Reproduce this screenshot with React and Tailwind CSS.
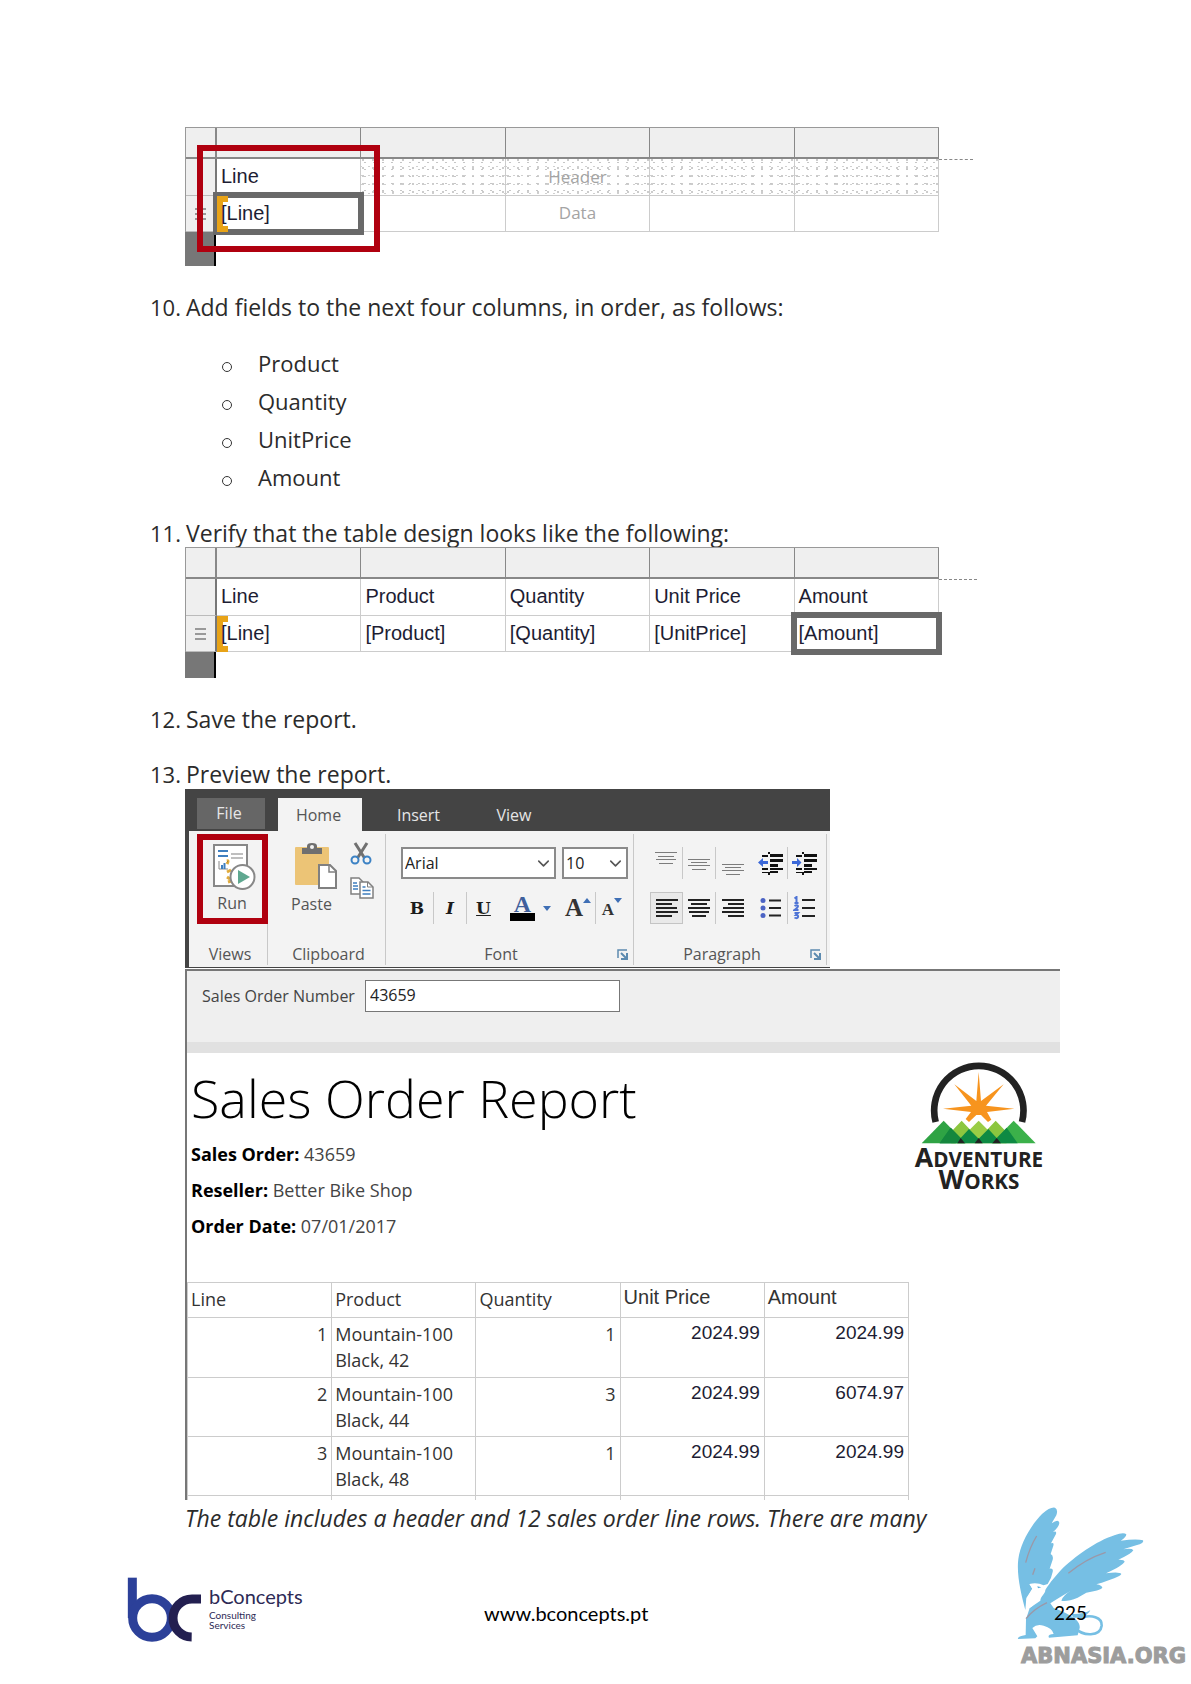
import React from "react";
import { ChevronDown } from "lucide-react";

const ARIAL = "font-['Liberation_Sans',Arial,sans-serif]";

function Bracket() {
  return (
    <span className="absolute left-0 top-0 h-9 w-[11px] bg-[#e8a317]">
      <span className="absolute left-[6px] top-[6px] bottom-[6px] right-0 bg-white" />
    </span>
  );
}

function DesignTable({ header, data, selected, placeholder, tail }) {
  return (
    <div className="relative w-full max-w-[754px]">
      <table className={"w-full table-fixed border-separate border-spacing-0 border-l border-t border-[#999] text-[20px] leading-6 text-[#1d1d33] " + ARIAL}>
        <colgroup>
          <col className="w-[31px]" />
          <col /><col /><col /><col /><col />
        </colgroup>
        <thead>
          <tr className="h-[31px] bg-[#efefef]">
            <td className="border-b-2 border-r-2 border-[#888]" />
            {header.map((_, i) => (
              <td key={i} className="border-b-2 border-r border-[#888]" />
            ))}
          </tr>
        </thead>
        <tbody>
          <tr className="h-[37px]">
            <td className="border-b border-r-2 border-b-[#bbb] border-r-[#777] bg-[#efefef]" />
            {header.map((h, i) => (
              <th
                key={i}
                scope="col"
                className={
                  placeholder && i > 0
                    ? "border-b border-r border-[#ccc] bg-[radial-gradient(#c6c6c6_1px,transparent_1px),radial-gradient(#d0d0d0_1px,transparent_1px),radial-gradient(#cccccc_1px,transparent_1px)] bg-[size:9px_7px,8px_9px,10px_8px] bg-[position:0_0,4px_3px,7px_5px] p-0 pb-px text-center font-['Open_Sans',sans-serif] text-[17px] font-normal text-[#a4a4a4]"
                    : "border-b border-r border-[#ccc] p-0 pb-[2px] pl-1 text-left font-normal"
                }
              >
                {h}
              </th>
            ))}
          </tr>
          <tr className="h-[36px]">
            <td className="border-b border-r-2 border-b-[#bbb] border-r-[#777] bg-[#efefef] p-0">
              <span className="mx-auto flex w-[11px] flex-col gap-[3px]">
                <i className="h-[2px] bg-[#999]" />
                <i className="h-[2px] bg-[#999]" />
                <i className="h-[2px] bg-[#999]" />
              </span>
            </td>
            {data.map((d, i) => (
              <td
                key={i}
                className={
                  placeholder && i > 0
                    ? "border-b border-r border-[#ccc] p-0 pb-px text-center font-['Open_Sans',sans-serif] text-[17px] text-[#a4a4a4]"
                    : "relative border-b border-r border-[#ccc] p-0 pb-[2px] pl-1"
                }
              >
                {selected === i && <span className="absolute -inset-x-1 -inset-y-1 border-[6px] border-[#696969]" />}
                {i === 0 && <Bracket />}
                <span className="relative">{d}</span>
              </td>
            ))}
          </tr>
        </tbody>
      </table>
      <span className={"absolute left-full top-8 border-t border-dashed border-[#888] " + tail} />
    </div>
  );
}

function Bars({ rows, color, h = 2, height = 20 }) {
  return (
    <svg width="22" height={height} viewBox={`0 0 22 ${height}`} aria-hidden="true">
      {rows.map(([x, y, w], i) => (
        <rect key={i} x={x} y={y} width={w} height={h} fill={color} />
      ))}
    </svg>
  );
}

function Indent({ right }) {
  return (
    <svg width="26" height="24" viewBox="0 0 26 24" aria-hidden="true">
      <g fill="#111">
        <rect x="4" y="4" width="6" height="2" /><rect x="12" y="3" width="13" height="3" />
        <rect x="12" y="8" width="13" height="3" /><rect x="12" y="13" width="8" height="3" />
        <rect x="4" y="17" width="6" height="2" /><rect x="12" y="17" width="13" height="2" />
        <rect x="4" y="21" width="8" height="1" /><rect x="12" y="20" width="8" height="2" />
        <rect x="10" y="1" width="2" height="2" /><rect x="10" y="22" width="2" height="2" />
      </g>
      <path d={right ? "M9.500 11.500L5 7v3H0v3h5v3z" : "M0 11.500L5 7v3h5v3H5v3z"} fill="#3b68d8" />
    </svg>
  );
}

function BulletsIcon() {
  return (
    <svg width="22" height="22" viewBox="0 0 22 22" aria-hidden="true">
      {[3.5, 11, 18.5].map((y) => (
        <g key={y}>
          <circle cx="3" cy={y} r="2.500" fill="#4b63c4" />
          <rect x="9" y={y - 1} width="12" height="2" fill="#222" />
        </g>
      ))}
    </svg>
  );
}

function NumbersIcon() {
  return (
    <svg width="24" height="24" viewBox="0 0 24 24" aria-hidden="true">
      <path d="M1.500 2.500L3.500 1v6M1.500 7h4M1.500 10q2.500-1.500 3.500 0q0 1.500-3.500 4h4M1.500 17h3.500l-2 2q2.500 0 2 2q-1 2-3.500.500" fill="none" stroke="#4f74d6" strokeWidth="2" />
      <rect x="9" y="3" width="13" height="2" fill="#222" />
      <rect x="9" y="11" width="13" height="2" fill="#222" />
      <rect x="9" y="19" width="13" height="2" fill="#222" />
    </svg>
  );
}

function RunIcon() {
  return (
    <svg className="ml-1" width="43" height="47" viewBox="0 0 43 47" aria-hidden="true">
      <rect x="1" y="1" width="33" height="41" fill="#fff" stroke="#888" strokeWidth="2" />
      <path d="M5 7h10M5 12h10" stroke="#3f7fbf" strokeWidth="2" />
      <path d="M18 10h12M18 14h12" stroke="#aaa" strokeWidth="1.500" />
      <path d="M6 17v8h9" stroke="#888" fill="none" />
      <path d="M9 25v-4M11.500 25v-6" stroke="#3f7fbf" strokeWidth="2" />
      <path d="M14 20q2-4 0-3M14 28l4-2M14 33l3 2M15 38l3-1" stroke="#e0ab3c" strokeWidth="3" />
      <circle cx="29.500" cy="33" r="12" fill="#fff" stroke="#888" strokeWidth="2" />
      <path d="M25 26v14l12-7z" fill="#5fa890" />
    </svg>
  );
}

function PasteIcon() {
  return (
    <svg width="42" height="46" viewBox="0 0 42 46" aria-hidden="true">
      <rect x="0" y="4" width="34" height="38" rx="1" fill="#ecc476" />
      <path d="M7 11V5h5V3q0-3 5-3t5 3v2h5v6z" fill="#6f6f6f" />
      <circle cx="17" cy="4" r="2" fill="#f3f3f3" />
      <path d="M24 22h11l6 6v17H24z" fill="#fff" stroke="#808080" strokeWidth="2" />
      <path d="M34 22v7h7" fill="none" stroke="#808080" strokeWidth="1.500" />
    </svg>
  );
}

function CutIcon() {
  return (
    <svg width="22" height="23" viewBox="0 0 22 23" aria-hidden="true">
      <path d="M5 1l9.500 15M17 1L7.500 16" stroke="#707070" strokeWidth="3" />
      <circle cx="5" cy="18" r="3.500" fill="none" stroke="#3c82c4" strokeWidth="2" />
      <circle cx="17" cy="18" r="3.500" fill="none" stroke="#3c82c4" strokeWidth="2" />
    </svg>
  );
}

function CopyIcon() {
  return (
    <svg width="24" height="22" viewBox="0 0 24 22" aria-hidden="true">
      <path d="M1 1h8l4 4v12H1z" fill="#fff" stroke="#808080" strokeWidth="1.500" />
      <path d="M3 6h4M3 9h5M3 12h5" stroke="#3f7fbf" strokeWidth="1.500" />
      <path d="M10 5h8l5 5v11H10z" fill="#fff" stroke="#808080" strokeWidth="1.500" />
      <path d="M17.500 5v5H23" fill="none" stroke="#808080" />
      <path d="M12.500 10h3M12.500 13.500h8M12.500 17h8" stroke="#3f7fbf" strokeWidth="1.500" />
    </svg>
  );
}

function Launcher() {
  return (
    <button type="button" aria-label="More options" className="self-center">
      <svg width="11" height="11" viewBox="0 0 11 11" aria-hidden="true">
        <path d="M1 9V1h9" fill="none" stroke="#5d8bb0" strokeWidth="1.500" />
        <path d="M4 4l5 5M10 4v6H4" fill="none" stroke="#5d8bb0" strokeWidth="2" />
      </svg>
    </button>
  );
}

const tool = "flex h-8 w-[33px] items-center justify-center";
const sep = " border-r border-[#c8c8c8]";
const slab = " font-['DejaVu_Serif',serif] text-[17px]";
const gray = "#7c7c7c";

function Ribbon() {
  return (
    <div className="flex w-full max-w-[645px] flex-col border-b border-l-4 border-[#444] bg-[#f3f3f3] text-[16px] leading-5 text-[#555]">
      <div className="-ml-1 flex h-[42px] items-end bg-[#444] pl-3 text-[#e6e6e6]">
        <button type="button" className="mb-[2px] mr-[13px] h-[31px] w-[68px] bg-[#666] pb-[2px] pr-1">File</button>
        <button type="button" className="h-[33px] w-[84px] bg-[#f3f3f3] pr-[3px] text-[#555]">Home</button>
        <button type="button" className="h-[33px] w-[113px]">Insert</button>
        <button type="button" className="h-[33px] w-[78px]">View</button>
      </div>
      <div className="flex pb-[2px] pr-[3px] pt-[3px]">
        <div className={"flex h-[131px] w-[79px] flex-col items-center justify-between pb-px" + sep}>
          <button type="button" className="ml-2 flex h-[90px] w-[71px] flex-col items-center justify-between border-[6px] border-[#b0000f] pb-[5px] pt-1">
            <RunIcon />
            <span>Run</span>
          </button>
          <span className="pl-1">Views</span>
        </div>
        <div className={"flex w-[120px] flex-col items-center justify-between pb-px" + sep}>
          <div className="flex gap-[10px] pl-1">
            <button type="button" className="ml-2 flex h-20 w-[48px] flex-col items-center justify-between pt-[9px]">
              <PasteIcon />
              <span className="pr-2">Paste</span>
            </button>
            <div className="flex flex-col gap-3 pt-2">
              <button type="button" aria-label="Cut"><CutIcon /></button>
              <button type="button" aria-label="Copy"><CopyIcon /></button>
            </div>
          </div>
          <span className="pl-1">Clipboard</span>
        </div>
        <div className={"flex w-[248px] flex-col justify-between pb-px pl-[15px] pr-[5px]" + sep}>
          <div className="flex flex-col gap-[13px] pt-[13px]">
            <div className="flex gap-[6px] text-[#222]">
              <label className="relative h-8 w-[155px]">
                <select aria-label="Font family" className="size-full appearance-none border-2 border-[#8a8a8a] bg-white pl-[2px]">
                  <option>Arial</option>
                </select>
                <ChevronDown className="pointer-events-none absolute right-[3px] top-[7px] size-[19px] text-[#555]" strokeWidth={2} />
              </label>
              <label className="relative h-8 w-[66px]">
                <select aria-label="Font size" className="size-full appearance-none border-2 border-[#8a8a8a] bg-white pl-[2px]">
                  <option>10</option>
                </select>
                <ChevronDown className="pointer-events-none absolute right-[3px] top-[7px] size-[19px] text-[#555]" strokeWidth={2} />
              </label>
            </div>
            <div className="flex font-['Liberation_Serif',serif] text-[21px] font-bold text-[#1c1c1c]">
              <button type="button" className={tool + sep + slab}>B</button>
              <button type="button" className={tool + sep + slab + " italic"}>I</button>
              <button type="button" className={tool + slab + " underline"}>U</button>
              <button type="button" aria-label="Font colour" className="flex h-8 w-[61px] items-center justify-center gap-2">
                <span className="flex flex-col items-center border-b-8 border-black px-1 text-[24px] leading-[18px] text-[#3f5f9c]">A</span>
                <svg width="8" height="5" viewBox="0 0 8 5" aria-hidden="true"><path d="M0 0h8L4 5z" fill="#3f6fb5" /></svg>
              </button>
              <button type="button" aria-label="Grow font" className={"flex h-8 w-[35px] items-center justify-center text-[25px] text-[#333]" + sep}>
                A
                <svg className="mb-4" width="8" height="5" viewBox="0 0 8 5" aria-hidden="true"><path d="M0 5h8L4 0z" fill="#3f6fb5" /></svg>
              </button>
              <button type="button" aria-label="Shrink font" className="flex h-8 w-[32px] items-center justify-center pt-1 text-[17px] text-[#333]">
                A
                <svg className="mb-5" width="8" height="5" viewBox="0 0 8 5" aria-hidden="true"><path d="M0 0h8L4 5z" fill="#3f6fb5" /></svg>
              </button>
            </div>
          </div>
          <div className="flex">
            <span className="flex-1 pr-4 text-center">Font</span>
            <Launcher />
          </div>
        </div>
        <div className={"flex flex-1 flex-col justify-between pb-px pl-4 pr-[5px]" + sep}>
          <div className="flex flex-col gap-[13px] pt-[13px]">
            <div className="flex">
              <button type="button" aria-label="Align top" className={tool + sep}>
                <Bars color={gray} h={1} height={24} rows={[[0, 1, 22], [3, 5, 16], [1, 8, 20], [4, 12, 14]]} />
              </button>
              <button type="button" aria-label="Align middle" className={tool + sep}>
                <Bars color={gray} h={1} height={24} rows={[[0, 8, 22], [3, 11, 16], [0, 14, 22], [4, 18, 14]]} />
              </button>
              <button type="button" aria-label="Align bottom" className={tool + " mr-[6px]"}>
                <Bars color={gray} h={1} height={24} rows={[[0, 13, 22], [3, 16, 16], [0, 19, 22], [4, 23, 14]]} />
              </button>
              <button type="button" aria-label="Decrease indent" className={tool + sep}><Indent /></button>
              <button type="button" aria-label="Increase indent" className={tool}><Indent right /></button>
            </div>
            <div className="flex">
              <button type="button" aria-label="Align left" className={tool + " border border-[#c4c4c4] bg-[#e9e9e9]"}>
                <Bars color="#222" rows={[[0, 1, 22], [0, 5, 16], [0, 9, 21], [0, 13, 22], [0, 17, 16]]} />
              </button>
              <button type="button" aria-label="Align center" className={tool + sep}>
                <Bars color="#222" rows={[[0, 1, 22], [3, 5, 16], [0, 9, 22], [1, 13, 20], [4, 17, 14]]} />
              </button>
              <button type="button" aria-label="Align right" className={tool + " mr-[6px]"}>
                <Bars color="#222" rows={[[0, 1, 22], [6, 5, 16], [1, 9, 21], [0, 13, 22], [6, 17, 16]]} />
              </button>
              <button type="button" aria-label="Bulleted list" className={tool + sep}><BulletsIcon /></button>
              <button type="button" aria-label="Numbered list" className={tool}><NumbersIcon /></button>
            </div>
          </div>
          <div className="flex">
            <span className="flex-1 pr-4 text-center">Paragraph</span>
            <Launcher />
          </div>
        </div>
      </div>
    </div>
  );
}

function AdventureWorksLogo() {
  return (
    <svg className="mt-1" width="133" height="140" viewBox="100 332 399 420" role="img" aria-label="Adventure Works">
      <path d="M168 515A134 134 0 1 1 427 515" fill="none" stroke="#222" strokeWidth="20" />
      <path d="M297 365L304 452L372 402L319 466L404 475L322 485L335 508L325 515L304 494H290L268 515L258 506L274 485L190 475L275 466L224 402L290 452Z" fill="#f7941e" />
      <path d="M126 579L192 511L258 579Z" fill="#2fa344" />
      <path d="M336 579L402 511L468 579Z" fill="#3bb14a" />
      <path d="M228 530L246 511L297 565L348 511L366 530L400 565L380 579H215L200 560Z" fill="#8cc63f" />
      <path d="M260 548L297 511L334 548L297 579Z" fill="#9acd45" />
      <path d="M213 532L243 563L268 536L297 565L326 536L351 563L381 532L414 579H180Z" fill="#0e8a43" />
      <path d="M213 532L243 563L228 579H180Z" fill="#15873d" />
      <path d="M233 579L243 563L256 579ZM285 579L297 563L309 579ZM338 579L351 563L364 579Z" fill="#222" />
      <g fontFamily="Open Sans, sans-serif" fontWeight="700" fill="#222" textAnchor="middle">
        <text x="298" y="651" fontSize="62"><tspan fontSize="80">A</tspan>DVENTURE</text>
        <text x="298" y="715" fontSize="62"><tspan fontSize="80">W</tspan>ORKS</text>
      </g>
    </svg>
  );
}

const lines = [
  ["1", "Mountain-100 Black, 42", "1", "2024.99", "2024.99"],
  ["2", "Mountain-100 Black, 44", "3", "2024.99", "6074.97"],
  ["3", "Mountain-100 Black, 48", "1", "2024.99", "2024.99"],
];

const cell = "border-b border-r border-[#ccc] pl-[3px] pr-1 align-top font-normal ";

function Report() {
  return (
    <div className="mt-px border-l-2 border-t-2 border-[#777]">
      <div className="flex h-[82px] items-start border-b-[11px] border-[#e1e1e1] bg-[#efefef] pl-[15px] pt-[9px] text-[16px] text-[#444]">
        <label htmlFor="order" className="w-[163px] leading-8">Sales Order Number</label>
        <input id="order" defaultValue="43659" className="h-8 w-[255px] border border-[#777] bg-white px-1 pb-[2px] text-[#222]" />
      </div>
      <div className="flex justify-between pl-1 pr-[14px] pt-1">
        <div className="text-[18px] leading-6 text-[#444]">
          <h1 className="mb-[10px] mt-[7px] text-[52px] font-light leading-[68px] text-black">Sales Order Report</h1>
          <p className="mb-3"><b className="text-black">Sales Order:</b> 43659</p>
          <p className="mb-3"><b className="text-black">Reseller:</b> Better Bike Shop</p>
          <p><b className="text-black">Order Date:</b> 07/01/2017</p>
        </div>
        <AdventureWorksLogo />
      </div>
      <div className="mt-11 h-[218px] max-w-[722px] overflow-hidden">
        <table className="w-full table-fixed border-separate border-spacing-0 border-l border-t border-[#ccc] text-[18px] leading-[26px] text-[#333]">
          <thead>
            <tr className="h-[35px] text-left">
              <th className={cell + "pt-[3px]"}>Line</th>
              <th className={cell + "pt-[3px]"}>Product</th>
              <th className={cell + "pt-[3px]"}>Quantity</th>
              <th className={cell + "pt-px text-[20px] " + ARIAL}>Unit Price</th>
              <th className={cell + "pt-px text-[20px] " + ARIAL}>Amount</th>
            </tr>
          </thead>
          <tbody>
            {lines.map((r, i) => (
              <tr key={r[0]} className={i === 0 ? "h-[60px]" : "h-[59px]"}>
                <td className={cell + "pt-[3px] text-right"}>{r[0]}</td>
                <td className={cell + "pt-[3px]"}>{r[1]}</td>
                <td className={cell + "pt-[3px] text-right"}>{r[2]}</td>
                <td className={cell + "pt-[2px] text-right text-[19px] text-[#1d1d33] " + ARIAL}>{r[3]}</td>
                <td className={cell + "pt-[2px] text-right text-[19px] text-[#1d1d33] " + ARIAL}>{r[4]}</td>
              </tr>
            ))}
            <tr className="h-[59px]">
              {[0, 1, 2, 3, 4].map((i) => <td key={i} className={cell} />)}
            </tr>
          </tbody>
        </table>
      </div>
    </div>
  );
}

function Step({ n, children }) {
  return (
    <div className="flex">
      <span className="w-9 shrink-0 text-[22px]">{n}.</span>
      <p>{children}</p>
    </div>
  );
}

function Griffin() {
  return (
    <svg width="127" height="133" viewBox="80 46 381 399" aria-hidden="true">
      <g fill="#76bfe4">
        <path d="M105 358C92 310 78 250 84 205C90 160 120 105 155 70Q180 48 194 51Q204 56 198 74L184 98Q204 84 207 96Q207 108 188 124Q200 120 197 130L182 158Q192 154 189 165L181 190Q190 194 187 207L178 234Q190 232 187 244Q184 262 172 280L160 284Q140 274 117 280L126 294L108 322Z" />
        <path d="M118 352L150 330C150 318 165 310 165 298C172 285 190 262 212 238C250 200 320 150 372 134Q400 123 408 131Q408 140 391 150Q440 143 458 149Q462 157 440 163L399 176Q425 172 429 179Q425 189 384 207Q402 206 403 213Q396 225 347 248Q388 242 393 250Q388 260 318 281Q336 284 336 292Q328 300 288 306L262 321Q230 334 213 330Q218 314 244 299Q205 322 180 338L190 352Q230 366 255 385Q270 398 268 412L262 434L176 441Q170 432 190 430Q186 412 160 405Q140 398 126 412L141 437L135 443L83 445Q80 437 106 433L107 386Z" />
        <path d="M244 370Q275 372 300 359Q294 372 272 381H248Z" />
      </g>
      <path d="M255 412C278 438 330 438 334 405C336 380 305 370 265 382" fill="none" stroke="#76bfe4" strokeWidth="8" />
      <path d="M118 280L132 286L150 282Q166 286 163 296L150 295L142 300L145 318Q138 338 118 352Q104 350 110 322L126 294Z" fill="#fff" />
      <path d="M141 287l12 3l-10 3z" fill="#5baedb" />
      <path d="M106 216Q118 170 139 136M127 252l7-19M234 248Q285 205 346 185M107 384Q130 355 170 336" fill="none" stroke="#9b98a8" strokeWidth="4" />
    </svg>
  );
}

export default function App() {
  return (
    <div className="flex min-h-screen flex-col bg-white pt-[127px] font-['Open_Sans','Noto_Sans',sans-serif] text-[23px] leading-8 text-[#2b2b2b]">
      <main className="pl-[150px] pr-[131px]">
        <figure className="relative ml-[35px]">
          <DesignTable
            header={["Line", "", "Header", "", ""]}
            data={["[Line]", "", "Data", "", ""]}
            selected={0}
            placeholder
            tail="w-[34px]"
          />
          <div className="h-[34px] w-[31px] border-r-2 border-black bg-[#777]" />
          <span className="absolute left-3 top-[18px] h-[107px] w-[183px] border-[6px] border-[#b0000f]" />
        </figure>

        <div className="mt-[25px]"><Step n="10">Add fields to the next four columns, in order, as follows:</Step></div>
        <ul className="ml-[72px] mt-[21px] text-[22px] leading-[38px]">
          {["Product", "Quantity", "UnitPrice", "Amount"].map((t) => (
            <li key={t} className="flex items-center">
              <span className="mt-2 mr-[26px] size-[10px] rounded-full border border-[#333]" />
              {t}
            </li>
          ))}
        </ul>

        <div className="mt-[21px]"><Step n="11">Verify that the table design looks like the following:</Step></div>
        <figure className="-mt-[2px] ml-[35px]">
          <DesignTable
            header={["Line", "Product", "Quantity", "Unit Price", "Amount"]}
            data={["[Line]", "[Product]", "[Quantity]", "[UnitPrice]", "[Amount]"]}
            selected={4}
            tail="w-[38px]"
          />
          <div className="h-[26px] w-[31px] border-r-2 border-black bg-[#777]" />
        </figure>

        <div className="mt-[25px]"><Step n="12">Save the report.</Step></div>
        <div className="mt-[23px]"><Step n="13">Preview the report.</Step></div>
        <figure className="-mt-px ml-[35px]">
          <Ribbon />
          <Report />
        </figure>
        <p className="ml-[35px] mt-[2px] italic">The table includes a header and 12 sales order line rows. There are many</p>
      </main>

      <footer className="relative mt-auto flex h-[150px] items-start justify-between pl-[127px] pr-[104px] pt-[43px]">
        <div className="flex gap-[7px] text-[#2d2a55]">
          <svg width="75" height="65" viewBox="50 51 225 195" role="img" aria-label="bConcepts">
            <path d="M66 53V174" stroke="#2c4099" strokeWidth="27" />
            <circle cx="125" cy="174" r="58" fill="none" stroke="#2c4099" strokeWidth="27" />
            <path d="M272 117H245A57 57 0 0 0 188 174A57 57 0 0 0 244 231" fill="none" stroke="#231f50" strokeWidth="27" />
          </svg>
          <div className="pt-[7px] font-['Lato',sans-serif] text-[10px] leading-[10px]">
            <div className="mb-[2px] text-[20px] leading-6">bConcepts</div>
            <div>Consulting</div>
            <div>Services</div>
          </div>
        </div>
        <a href="#" className="absolute left-[484px] top-[65px] font-['Lato',sans-serif] text-[20px] leading-7 text-black">www.bconcepts.pt</a>
        <span className="absolute right-[47px] top-[-28px]"><Griffin /></span>
        <span className="relative mt-[22px] font-['Lato',sans-serif] text-[19px] leading-7 text-black">225</span>
        <span className="absolute bottom-[16px] right-[5px] font-['DejaVu_Sans',sans-serif] text-[21px] font-bold leading-6 text-[#9d9d9d] [-webkit-text-stroke:1px_#9d9d9d]">ABNASIA.ORG</span>
      </footer>
    </div>
  );
}
